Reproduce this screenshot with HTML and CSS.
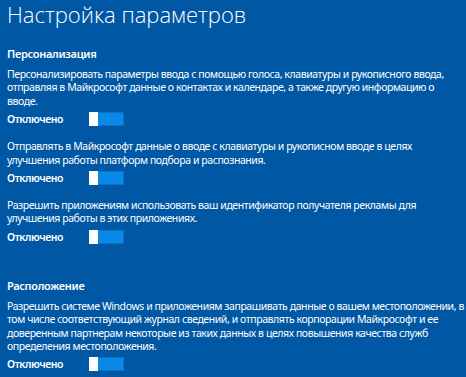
FILE: index.html
```html
<!DOCTYPE html>
<html>
<head>
  <meta charset="UTF-8">
  <link rel="stylesheet" href="styles.css">
</head>
<body>
  <h1 class="title">Настройка параметров</h1>

  <div class="group">
    <h3>Персонализация</h3>

    <div class="setting">
      <p>Персонализировать параметры ввода с помощью голоса, клавиатуры и рукописного ввода, отправляя в Майкрософт данные о контактах и календаре, а также другую информацию о вводе.</p>
      <div class="toggle-row">
        <span class="toggle-label">Отключено</span>
        <span class="toggle"><span class="knob"></span></span>
      </div>
    </div>

    <div class="setting">
      <p>Отправлять в Майкрософт данные о вводе с клавиатуры и рукописном вводе в целях улучшения работы платформ подбора и распознания.</p>
      <div class="toggle-row">
        <span class="toggle-label">Отключено</span>
        <span class="toggle"><span class="knob"></span></span>
      </div>
    </div>

    <div class="setting">
      <p>Разрешить приложениям использовать ваш идентификатор получателя рекламы для улучшения работы в этих приложениях.</p>
      <div class="toggle-row">
        <span class="toggle-label">Отключено</span>
        <span class="toggle"><span class="knob"></span></span>
      </div>
    </div>
  </div>

  <div class="group">
    <h3>Расположение</h3>

    <div class="setting">
      <p>Разрешить системе Windows и приложениям запрашивать данные о вашем местоположении, в том числе соответствующий журнал сведений, и отправлять корпорации Майкрософт и ее доверенным партнерам некоторые из таких данных в целях повышения качества служб определения местоположения.</p>
      <div class="toggle-row">
        <span class="toggle-label">Отключено</span>
        <span class="toggle"><span class="knob"></span></span>
      </div>
    </div>
  </div>
</body>
</html>
```

FILE: styles.css
```css
body {
  margin: 0;
  padding: 0 2px 0 7px;
  background: #0058a4;
  color: #ffffff;
  font-family: "Noto Sans", "Open Sans", sans-serif;
  overflow: hidden;
}

.title {
  margin: 0;
  padding-top: 1px;
  font-family: "Open Sans", "Noto Sans", sans-serif;
  font-size: 22px;
  font-weight: 300;
  line-height: 26px;
}

.group {
  margin-top: 19px;
}

.group + .group {
  margin-top: 34px;
}

h3 {
  margin: 0 0 6px 0;
  font-size: 11px;
  font-weight: 600;
  line-height: 16px;
  letter-spacing: -0.3px;
}

.setting + .setting {
  margin-top: 14px;
}

.setting p {
  margin: 0;
  font-size: 10.5px;
  line-height: 13.4px;
  letter-spacing: -0.42px;
}

.toggle-row {
  display: flex;
  align-items: center;
  margin-top: 4px;
  height: 14px;
}

.toggle-label {
  width: 82px;
  font-size: 10.5px;
  font-weight: 600;
  letter-spacing: -0.45px;
}

.toggle {
  display: flex;
  width: 35px;
  height: 14px;
  box-sizing: border-box;
  background: #0a88e6;
  border: 1px solid #0571c7;
}

.knob {
  width: 9px;
  margin: -1px 0 -1px -1px;
  background: #ffffff;
}
```
